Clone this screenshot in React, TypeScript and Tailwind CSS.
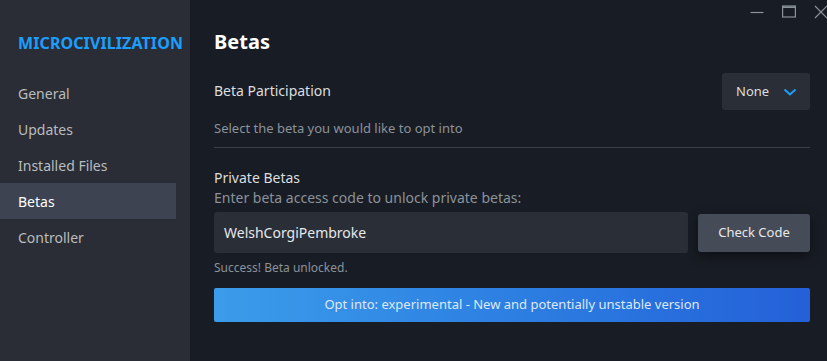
import React from "react";

export default function App() {
  const nav = ["General", "Updates", "Installed Files", "Betas", "Controller"];
  return (
    <div
      className="flex w-[827px] h-[361px] overflow-hidden bg-[#181c24] text-[#dcdedf]"
      style={{ fontFamily: '"Noto Sans", "Open Sans", sans-serif' }}
    >
      <aside className="w-[190px] shrink-0 bg-[#2a2d35] pt-[31px]">
        <div className="pl-[18px] text-[16px] font-bold text-[#1a9fff] leading-[24px] tracking-[0.1px]">
          MICROCIVILIZATION
        </div>
        <nav className="mt-[20px] flex flex-col">
          {nav.map((n) => (
            <div
              key={n}
              className={
                n === "Betas"
                  ? "w-[176px] h-[36px] flex items-center pl-[18px] text-[14px] text-white bg-[#3d4350]"
                  : "w-[176px] h-[36px] flex items-center pl-[18px] text-[14px] text-[#b8bcbf]"
              }
            >
              {n}
            </div>
          ))}
        </nav>
      </aside>
      <main className="flex-1 relative pl-[24px] pr-[17px] pt-[28px]">
        <div className="absolute top-[5px] right-[-1px] flex items-center gap-[18px] text-[#8b929a]">
          <svg width="14" height="14" viewBox="0 0 14 14"><path d="M0.5 7.5h13" stroke="#8b929a" strokeWidth="1.2" /></svg>
          <svg width="14" height="14" viewBox="0 0 14 14"><rect x="0.6" y="1" width="12.8" height="11" fill="none" stroke="#8b929a" strokeWidth="1.2" /><path d="M0.6 2.2h12.8" stroke="#8b929a" strokeWidth="1.6" /></svg>
          <svg width="14" height="14" viewBox="0 0 14 14"><path d="M1 1l12 12M13 1L1 13" stroke="#8b929a" strokeWidth="1.2" /></svg>
        </div>
        <h1 className="text-[20px] font-bold text-white leading-[28px]">Betas</h1>
        <div className="mt-[17px] flex items-start justify-between">
          <div className="pt-[8px] text-[14px] leading-[20px] text-[#dcdedf]">Beta Participation</div>
          <div className="w-[88px] h-[37px] rounded-[3px] bg-[#2a2e37] flex items-center pl-[14px] gap-[14px]">
            <span className="text-[13px] text-[#dcdedf]">None</span>
            <svg width="14" height="10" viewBox="0 0 14 10"><path d="M1.5 2.5l5.5 5 5.5-5" fill="none" stroke="#1a9fff" strokeWidth="2" /></svg>
          </div>
        </div>
        <div className="mt-[9px] text-[13px] leading-[18px] text-[#8b929a]">Select the beta you would like to opt into</div>
        <div className="mt-[10px] h-px bg-[#3a3f48]" />
        <div className="mt-[20px] text-[14px] leading-[20px] text-[#dcdedf]">Private Betas</div>
        <div className="text-[14px] leading-[20px] text-[#8b929a]">Enter beta access code to unlock private betas:</div>
        <div className="mt-[4px] flex items-center gap-[10px]">
          <div className="flex-1 h-[41px] rounded-[3px] bg-[#2a2e37] flex items-center pl-[10px] text-[14px] text-[#e6e8ea]">
            WelshCorgiPembroke
          </div>
          <div className="w-[112px] h-[38px] rounded-[3px] bg-[#464c57] flex items-center justify-center text-[13px] text-[#e6e8ea] shadow-[0_4px_12px_rgba(0,0,0,0.45)]">
            Check Code
          </div>
        </div>
        <div className="mt-[6px] text-[12px] leading-[18px] text-[#8b929a]">Success! Beta unlocked.</div>
        <div className="mt-[11px] h-[34px] rounded-[2px] bg-gradient-to-r from-[#3b9cea] to-[#2460d8] flex items-center justify-center text-[13px] text-[#dfe8f6]">
          Opt into: experimental - New and potentially unstable version
        </div>
      </main>
    </div>
  );
}
